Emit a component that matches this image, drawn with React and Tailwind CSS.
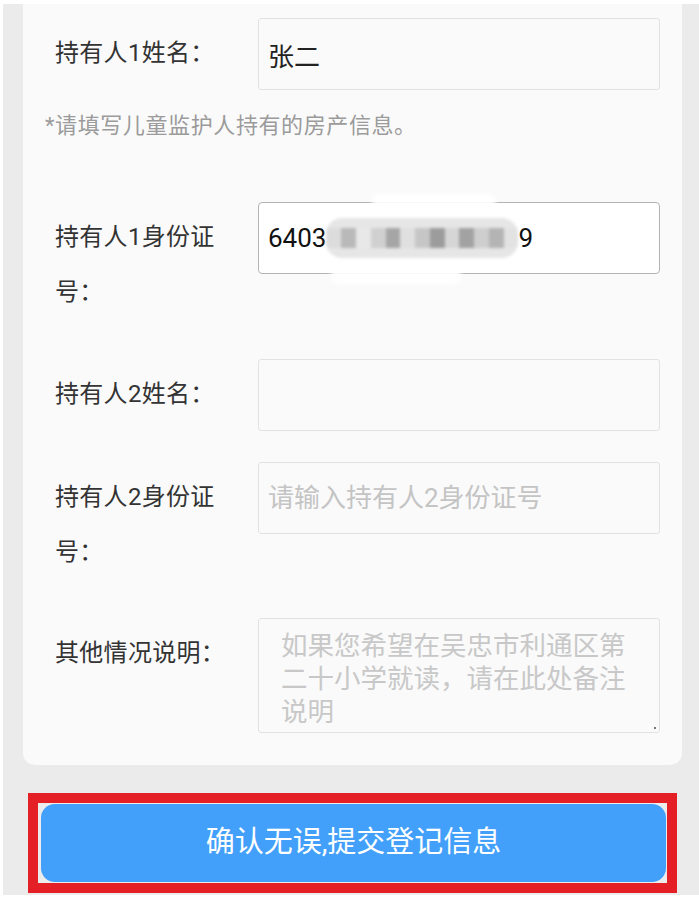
import React from 'react';

const font = "font-['Roboto','Noto_Sans_CJK_SC',sans-serif]";

const Label = ({ children }) => (
  <div className="w-[203px] shrink-0 pt-[8px] pr-[18px] text-[24px] leading-[55px] tracking-[0.3px] text-[#333333]">
    {children}
  </div>
);

const Field = ({ label, children, className = '' }) => (
  <div className={`flex items-start pl-[10px] ${className}`}>
    <Label>{label}</Label>
    {children}
  </div>
);

const inputCls =
  'w-[402px] h-[72px] shrink-0 rounded-[3px] border border-[#e2e2e2] bg-[#fafafa] pl-[9px] text-[26px] text-[#222222] outline-none placeholder:text-[#c4c4c4]';

// mosaic used to hide the middle digits of the id number
const mosaic = ['#dcdcdc', '#b9b9b9', '#e8e8e8', '#d0d0d0', '#a6a6a6', '#e0e0e0', '#c6c6c6', '#9c9c9c', '#d6d6d6', '#a2a2a2', '#cecece', '#b4b4b4', '#e2e2e2'];

const App = () => {
  return (
    <div className={`w-[699px] h-[899px] bg-white pt-[4px] pl-[3px] pb-[4px] ${font}`}>
      <div className="h-full bg-[#ebebeb] pl-[20px] pr-[17px] pb-[2px] flex flex-col">
        {/* form card */}
        <div className="bg-[#fafafa] rounded-b-[12px] pt-[14px] pb-[32px] pl-[22px] pr-[22px]">
          <Field label="持有人1姓名：">
            <input className={inputCls} defaultValue="张二" />
          </Field>

          <p className="mt-[21px] text-[22px] leading-[30px] tracking-[0.6px] text-[#9b9b9b]">*请填写儿童监护人持有的房产信息。</p>

          <Field label="持有人1身份证号：" className="mt-[61px]">
            <div className="relative w-[402px] h-[72px] shrink-0 rounded-[4px] border border-[#b4b4b4] bg-white pl-[9px] flex items-center text-[26px] text-[#111111]">
              <span>6403</span>
              <span className="flex h-[40px] w-[192px] items-center overflow-hidden rounded-[16px] bg-[#e6e6e6] blur-[1.5px]">
                {mosaic.map((c, i) => (
                  <span key={i} className="h-[20px] flex-1" style={{ background: c }} />
                ))}
              </span>
              <span>9</span>
              <div className="absolute left-[113px] top-[-9px] h-[14px] w-[124px] rounded-[6px] bg-white/90 blur-[2px]" />
              <div className="absolute left-[72px] bottom-[-11px] h-[16px] w-[130px] rounded-[6px] bg-white/90 blur-[2px]" />
            </div>
          </Field>

          <Field label="持有人2姓名：" className="mt-[39px]">
            <input className={inputCls} />
          </Field>

          <Field label="持有人2身份证号：" className="mt-[31px]">
            <input className={inputCls} placeholder="请输入持有人2身份证号" />
          </Field>

          <Field label="其他情况说明：" className="mt-[38px]">
            <div className="relative shrink-0">
              <textarea
                className="block w-[402px] h-[115px] resize-none rounded-[3px] border border-[#e2e2e2] bg-[#fafafa] pl-[22px] pr-[16px] pt-[10px] text-[26.5px] leading-[33px] text-[#222222] outline-none placeholder:text-[#c8c8c8]"
                placeholder="如果您希望在吴忠市利通区第二十小学就读，请在此处备注说明"
              />
              <span className="absolute right-[4px] bottom-[4px] h-[2px] w-[2px] bg-[#777777]" />
            </div>
          </Field>
        </div>

        {/* submit */}
        <div className="mt-[28px] ml-[5px] w-[649px] h-[100px] border-[10px] border-[#e51f26] bg-[#ececec] pt-[1px] pb-[1px] pl-[3px] pr-[1px]">
          <button className="w-full h-full rounded-[14px] bg-[#42a0fa] text-[29px] text-white">
            确认无误,提交登记信息
          </button>
        </div>
      </div>
    </div>
  );
};

export default App;
